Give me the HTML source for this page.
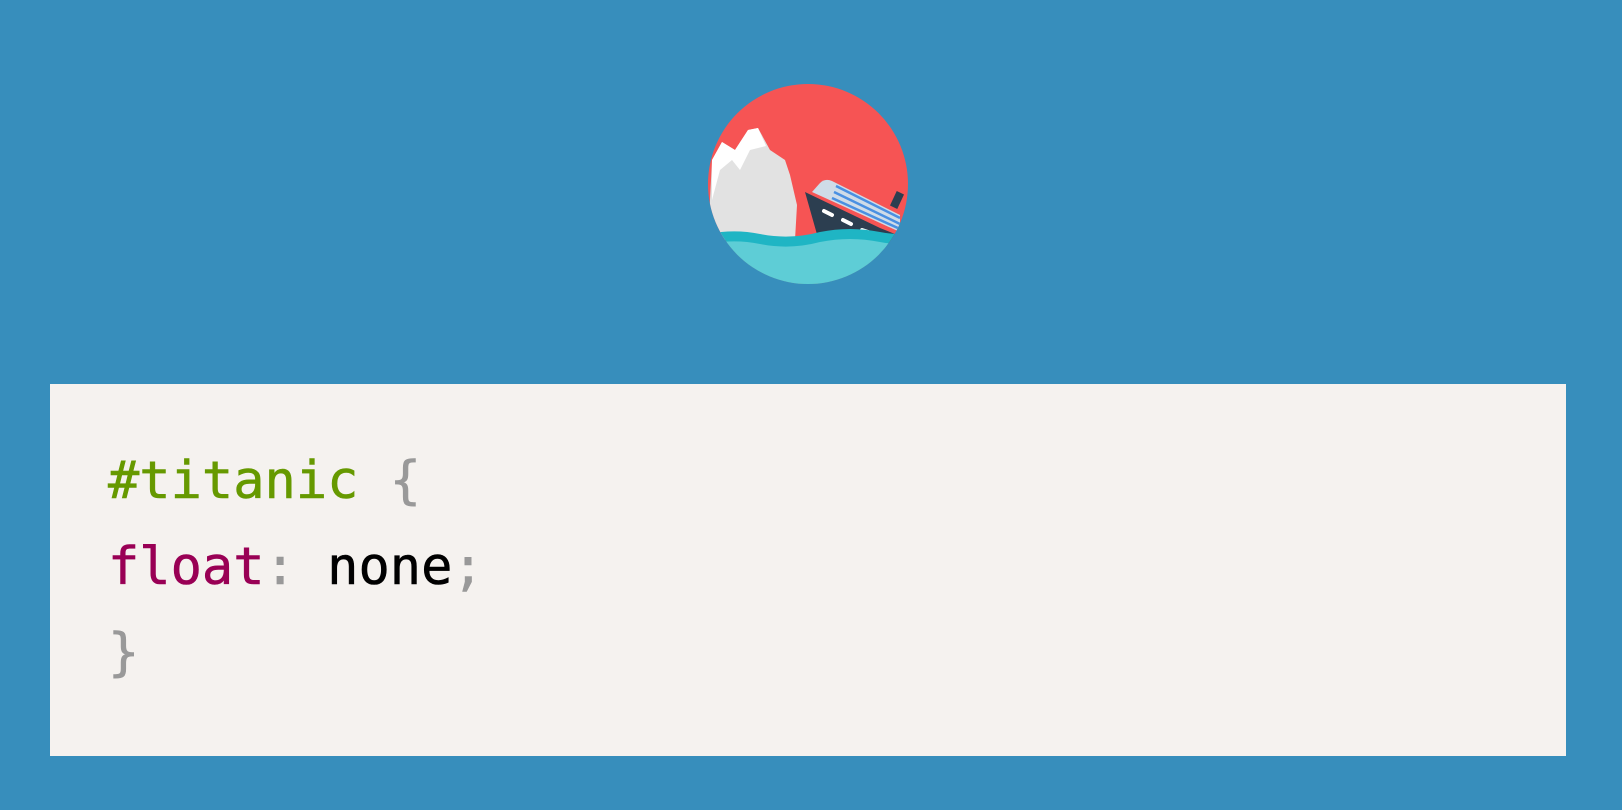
<!DOCTYPE html>
<html><head><style>
html,body{margin:0;padding:0;width:1622px;height:810px;background:#378ebc;overflow:hidden}
.box{position:absolute;left:50px;top:384px;width:1516px;height:372px;background:#f5f2ef}
pre{margin:0;position:absolute;left:58px;top:54px;font-family:"DejaVu Sans Mono","Liberation Mono",monospace;font-size:52px;line-height:86px;color:#000;-webkit-text-stroke:0.6px currentColor}
.g{color:#669900}.p{color:#990055}.x{color:#999}
</style></head><body>
<svg style="position:absolute;left:0;top:0" width="1622" height="400">
<defs><clipPath id="c"><circle cx="808" cy="184" r="100"/></clipPath></defs>
<g clip-path="url(#c)">
<rect x="700" y="80" width="220" height="220" fill="#f65454"/>
<path d="M708 240 L712 160 L722 142 L735 150 L748 130 L758 128 L770 150 L785 160 L790 175 L797 205 L795 240 Z" fill="#e2e2e2"/>
<path d="M712 160 L722 142 L735 150 L748 130 L758 128 L766 146 L750 150 L740 170 L732 160 L720 170 L712 200 Z" fill="#fff"/>
<path d="M805 192 L880 228 L900 236 L900 245 L820 245 Z" fill="#2c3e50"/>
<path d="M820 183 Q825 178 832 181 L900 215 L900 232 L812 192 Z" fill="#cfdce8"/>
<path d="M836 186 L900 218 M834 192 L900 224 M832 198 L900 229" stroke="#4a90e2" stroke-width="2.5"/>
<rect x="893" y="192" width="8" height="16" fill="#2c3e50" transform="rotate(25 897 200)"/>
<g stroke="#fff" stroke-width="4" stroke-linecap="round"><path d="M824 211 L832 215 M843 220 L851 224 M862 230 L868 232"/></g>
<path d="M700 236 Q730 228 760 234 Q790 240 820 232 Q850 226 880 232 Q900 236 920 232 L920 300 L700 300 Z" fill="#1fb5c4"/>
<path d="M700 246 Q730 238 760 244 Q790 250 820 242 Q850 236 880 242 Q900 246 920 242 L920 300 L700 300 Z" fill="#5ecdd6"/>
</g>
</svg>
<div class="box"><pre><span class="g">#titanic</span> <span class="x">{</span>
<span class="p">float</span><span class="x">:</span> none<span class="x">;</span>
<span class="x">}</span></pre></div>
</body></html>
